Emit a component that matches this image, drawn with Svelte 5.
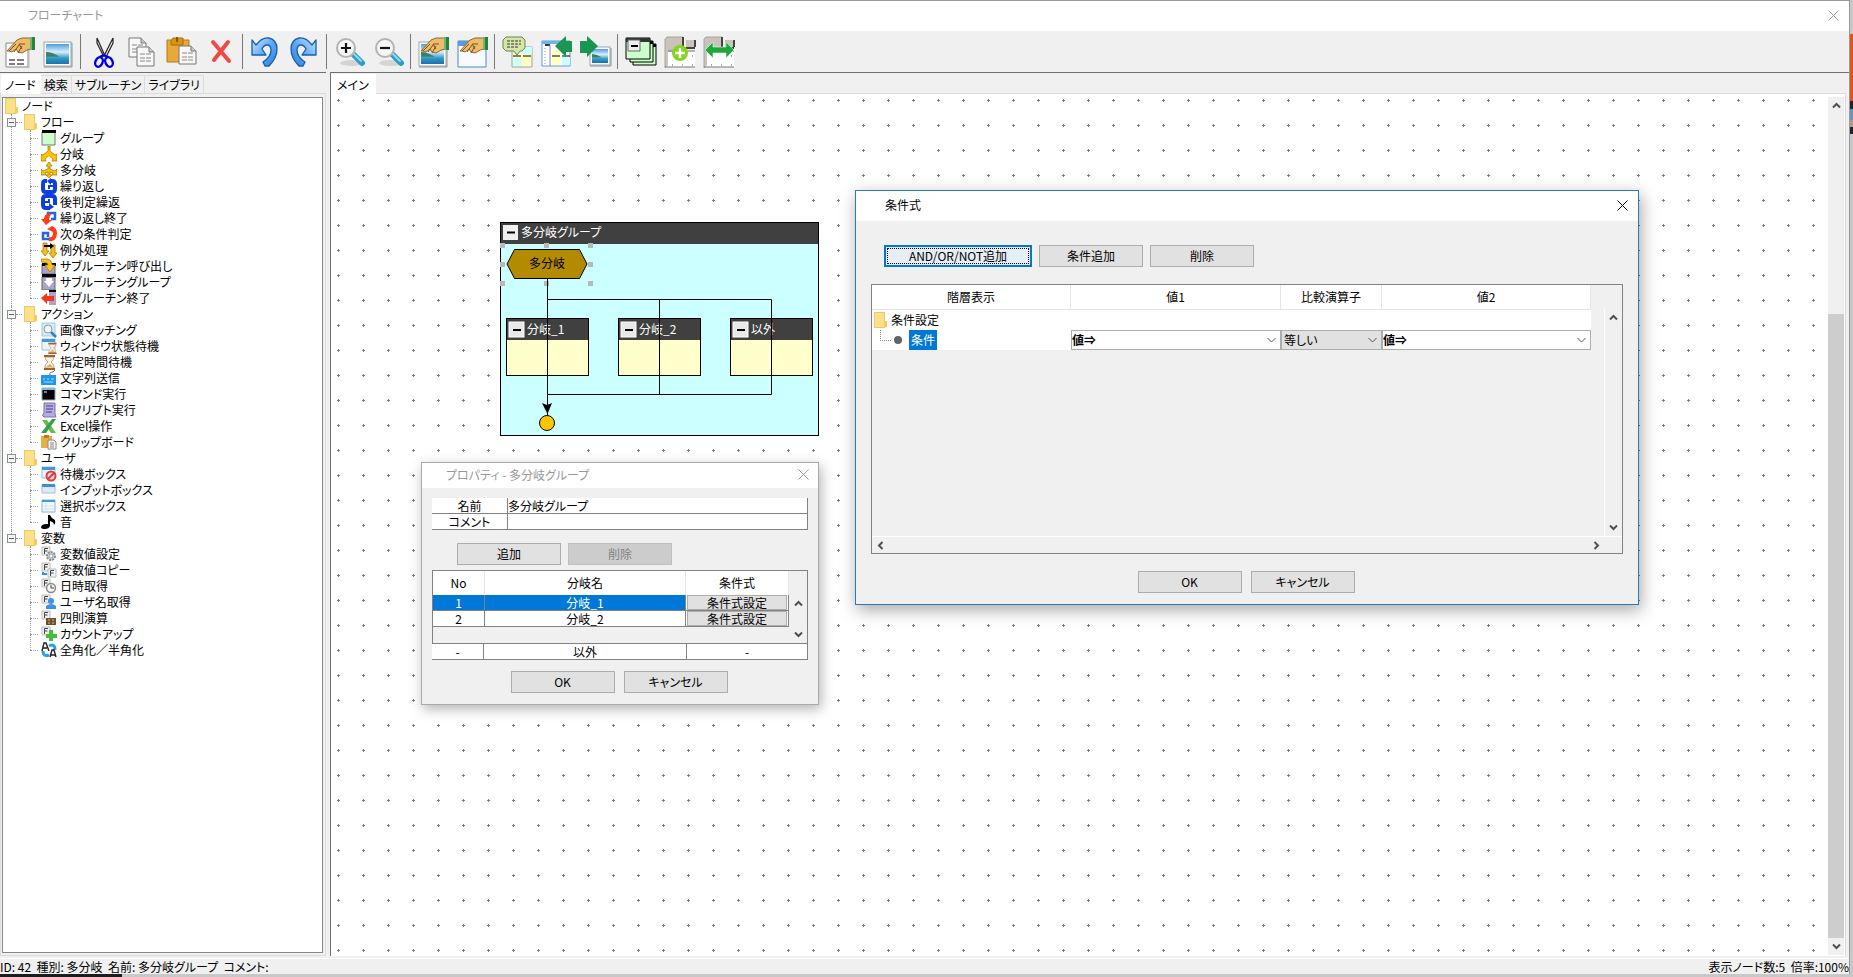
<script>
  const toolGroups = [
    [
      { icon: "props", label: "プロパティ" },
      { icon: "image", label: "画像" },
    ],
    [
      { icon: "cut", label: "切り取り" },
      { icon: "copy", label: "コピー" },
      { icon: "paste", label: "貼り付け" },
      { icon: "delete", label: "削除" },
    ],
    [
      { icon: "undo", label: "元に戻す" },
      { icon: "redo", label: "やり直し" },
    ],
    [
      { icon: "zoomin", label: "拡大" },
      { icon: "zoomout", label: "縮小" },
    ],
    [
      { icon: "imageprops", label: "画像プロパティ" },
      { icon: "windowprops", label: "ウィンドウプロパティ" },
    ],
    [
      { icon: "comment", label: "コメント" },
      { icon: "import", label: "インポート" },
      { icon: "export", label: "エクスポート" },
    ],
    [
      { icon: "groups", label: "グループ" },
      { icon: "addtab", label: "タブ追加" },
      { icon: "movetab", label: "タブ移動" },
    ],
  ];

  const tabs = ["ノード", "検索", "サブルーチン", "ライブラリ"];
  let activeTab = $state("ノード");

  const tree = [
    {
      name: "フロー",
      items: [
        ["group", "グループ"],
        ["branch", "分岐"],
        ["multi", "多分岐"],
        ["loop", "繰り返し"],
        ["postloop", "後判定繰返"],
        ["loopend", "繰り返し終了"],
        ["next", "次の条件判定"],
        ["exception", "例外処理"],
        ["subcall", "サブルーチン呼び出し"],
        ["subgroup", "サブルーチングループ"],
        ["subend", "サブルーチン終了"],
      ],
    },
    {
      name: "アクション",
      items: [
        ["match", "画像マッチング"],
        ["winwait", "ウィンドウ状態待機"],
        ["timewait", "指定時間待機"],
        ["keys", "文字列送信"],
        ["command", "コマンド実行"],
        ["script", "スクリプト実行"],
        ["excel", "Excel操作"],
        ["clipboard", "クリップボード"],
      ],
    },
    {
      name: "ユーザ",
      items: [
        ["waitbox", "待機ボックス"],
        ["inputbox", "インプットボックス"],
        ["selectbox", "選択ボックス"],
        ["sound", "音"],
      ],
    },
    {
      name: "変数",
      items: [
        ["varset", "変数値設定"],
        ["varcopy", "変数値コピー"],
        ["date", "日時取得"],
        ["username", "ユーザ名取得"],
        ["calc", "四則演算"],
        ["countup", "カウントアップ"],
        ["width", "全角化／半角化"],
      ],
    },
  ];

  const boxes = [
    { x: 6, name: "分岐_1" },
    { x: 118, name: "分岐_2" },
    { x: 230, name: "以外" },
  ];
  const handles = [3, 47, 91].flatMap((x) => [21, 40, 59].map((y) => [x, y]));

  let groupName = $state("多分岐グループ");
  let comment = $state("");
  let selectedBranch = $state(1);
  const branches = [
    { no: 1, name: "分岐_1" },
    { no: 2, name: "分岐_2" },
  ];
</script>

{#snippet hand()}
  <path d="M3 15 13 4l5-2h9v11l-4 1-3 2-2 1-4-1-2-3-4 3-3-1z" fill="#edbb6a" stroke="#93682a" />
  <path d="M12 8 5 15M15 9l-5 7M18 10l-4 7M21 8l-6 0 3 5" fill="none" stroke="#7d531c" />
  <path d="M26 1h5v13h-5z" fill="#23843a" />
  <path d="M26 1h2v13h-2z" fill="#69b877" />
{/snippet}

{#snippet picture(x, y, w, h)}
  <rect {x} {y} width={w} height={h} fill="#fff" stroke="#9aa3ad" />
  <path d="M{x} {y + h + 1}h{w + 1}v-{h}" fill="none" stroke="#8a939c" />
  <rect x={x + 2} y={y + 2} width={w - 4} height={h - 4} fill="url(#sky)" />
  <path d="M{x + 2} {y + h / 2 - 2}q{w / 4} 0 {w / 2} {h / 5}h-{w / 2}z" fill="#3d8061" />
{/snippet}

{#snippet sheet(x, y, w, h)}
  <path d="M{x} {y}h{w - 5}l5 5v{h - 5}h-{w}z" fill="#f8f8f8" stroke="#777" />
  <path d="M{x + w - 5} {y}v5h5" fill="#ccc" stroke="#777" />
  <path d="M{x + 3} {y + 7}h{w - 6}m-{w - 6} 4h{w - 6}m-{w - 6} 3h{w - 6}" stroke="#888" stroke-dasharray="5 1" />
{/snippet}

{#snippet tabPage()}
  <path d="M1 32V3l2-2h16v11h11V4" fill="#c9c3bc" stroke="#aaa39b" />
  <path d="M19 1v11h12" fill="none" stroke="#444" stroke-width="2" />
  <path d="M22 4h8v7h-8z" fill="#c9c3bc" />
  <path d="M31 4v7" stroke="#444" stroke-width="2" />
  <path d="M4 16h27v15H4z" fill="#fff" />
  <path d="M4 15h27M1 31h30" stroke="#777" />
  <path d="M8 29h1m9 0h1m9 0h1M28 20h1" stroke="#555" />
{/snippet}

{#snippet magnifier()}
  <ellipse cx="18" cy="27" rx="12" ry="3" fill="#d4d4d4" />
  <path d="M19 18l9 9" stroke="#2e9cc4" stroke-width="6" stroke-linecap="round" />
  <path d="M19 17l8 8" stroke="#8bdcf2" stroke-width="2" stroke-linecap="round" />
  <circle cx="12" cy="12" r="9" fill="#f6f6f6" stroke="#b3b3b3" stroke-width="2" />
{/snippet}

{#snippet toolIcon(kind)}
  <svg viewBox="0 0 32 32" width="32" height="32" aria-hidden="true">
    {#if kind === "props"}
      <path d="M2 7h22v24H2z" fill="#fff" stroke="#888" />
      <path d="M25 8v24H3" fill="none" stroke="#bbb" />
      <path d="M5 24h6m2 0h7M5 28h6m2 0h7" stroke="#555" stroke-width="1.4" />
      {@render hand()}
    {:else if kind === "image"}
      {@render picture(1, 6, 27, 24)}
    {:else if kind === "cut"}
      <path d="M9 2 17 20M25 2l-9 18M9 2v5l6 12M25 2v5l-6 12" fill="#fff" stroke="#222" stroke-width="1.2" />
      <ellipse cx="11" cy="26" rx="3.5" ry="5" transform="rotate(25 11 26)" fill="none" stroke="#0000d8" stroke-width="2.4" />
      <ellipse cx="21" cy="26" rx="3.5" ry="5" transform="rotate(-25 21 26)" fill="none" stroke="#0000d8" stroke-width="2.4" />
      <path d="M12 21q4-3 8 0" fill="none" stroke="#0000d8" stroke-width="2.4" />
    {:else if kind === "copy"}
      {@render sheet(2, 2, 17, 19)}
      {@render sheet(10, 11, 17, 19)}
    {:else if kind === "paste"}
      <path d="M1 4h22v22H1z" fill="#e9a93a" stroke="#b57a1c" />
      <path d="M7 2h10v7H5V5z" fill="#dd9413" stroke="#a76d10" />
      <path d="M11 1v5" stroke="#8a570b" stroke-width="2" />
      {@render sheet(13, 10, 17, 18)}
    {:else if kind === "delete"}
      <path d="M8 6 24 25M23 6 9 24" stroke="#f04848" stroke-width="4" stroke-linecap="round" />
    {:else if kind === "undo" || kind === "redo"}
      <path
        transform={kind === "redo" ? "matrix(-1 0 0 1 29 0)" : undefined}
        d="M2 4 6 9Q12 1 19 2q8 2 8 11 0 9-8 17h-4q-1-2-2-4 8-5 8-12 0-5-4-5-3 0-5 4l4 6H2z"
        fill="url(#blue)"
        stroke="#1560ae"
        stroke-width="1.3"
        stroke-linejoin="round"
      />
    {:else if kind === "zoomin"}
      {@render magnifier()}
      <path d="M7 12h10M12 7v10" stroke="#111" stroke-width="2.2" />
    {:else if kind === "zoomout"}
      {@render magnifier()}
      <path d="M7 12h10" stroke="#111" stroke-width="2.2" />
    {:else if kind === "imageprops"}
      {@render picture(1, 6, 27, 24)}
      {@render hand()}
    {:else if kind === "windowprops"}
      <path d="M1 5h28v26H1z" fill="#f7faff" stroke="#4a86c8" />
      <path d="M1 5h28v5H1z" fill="#5a9be0" />
      {@render hand()}
    {:else if kind === "comment"}
      <path d="M10 11h20v20H10z" fill="#ffffc4" stroke="#92a8a8" />
      <path d="M11 11h8v6h-8m9-6h10v7h-10zM11 22h8v8h-8z" fill="#cff" />
      <path d="M11 20h8m2 0h8" stroke="#000" />
      <path d="M4 1h16l3 3v8l-3 3h-2l-3 4-3-4H4l-3-3V4z" fill="#d5e6a8" stroke="#6c8444" />
      <path d="M5 5h14M5 8h14M5 11h12" stroke="#333" stroke-dasharray="3 1" />
    {:else if kind === "import"}
      <path d="M1 5h28v25H1z" fill="#fff" stroke="#5c9fd8" />
      <path d="M1 5h28v3H1z" fill="#6fb4ea" />
      <path d="M4 9h5" stroke="#336" stroke-width="2" />
      <path d="M9 9v21" stroke="#88a" />
      <path d="M4 12v17" stroke="#99a" stroke-dasharray="1 2" />
      <path d="M11 14h8v15h-8z" fill="#ffffc0" />
      <path d="M21 21h8v8h-8z" fill="#cff" />
      <path d="M11 20h8m2 0h8" stroke="#000" />
      <path d="M14 10 25 0v5h6v11h-6v5z" fill="#199652" />
    {:else if kind === "export"}
      {@render picture(10, 11, 20, 18)}
      <path d="M0 5h7V0l11 10L7 21v-4H0z" fill="#199652" />
    {:else if kind === "groups"}
      <path d="M8 8h23v21H8z" fill="#cfc" stroke="#000" />
      <path d="M8 8h23v3H8z" />
      <path d="M5 5h23v21H5z" fill="#cfc" stroke="#000" />
      <path d="M5 5h23v3H5z" />
      <path d="M1 2h24v21H1z" fill="#cfc" stroke="#000" />
      <path d="M1 2h24v4H1z" fill="#333" />
      <path d="M3 4h12v11H3z" fill="#eee" stroke="#666" />
      <path d="M6 10h7" stroke="#000" stroke-width="2" />
    {:else if kind === "addtab"}
      {@render tabPage()}
      <circle cx="16" cy="17" r="8" fill="#86d51f" />
      <path d="M11 17h10M16 12v10" stroke="#fff" stroke-width="2.4" />
    {:else}
      {@render tabPage()}
      <path d="M2 14 10 6v5h13V6l8 8-8 8v-5H10v5z" fill="#1ea83c" stroke="#e8f6ea" stroke-width=".6" />
    {/if}
  </svg>
{/snippet}

{#snippet folder()}
  <svg class="folder" viewBox="0 0 13 16" width="13" height="16" aria-hidden="true">
    <path d="M0 0h11v16H0z" fill="#fbe08a" />
    <path d="M.5.5h10v15H.5z" fill="none" stroke="#ecc962" />
    <path d="M10 9h3v6l-3 1z" fill="#f3cd5e" />
  </svg>
{/snippet}

{#snippet miniWindow()}
  <path d="M1 1h13v11H1z" fill="#eaf5fd" stroke="#9dbdd6" />
  <path d="M1 1h13v3H1z" fill="#3f9be0" />
{/snippet}

{#snippet varBox()}
  <path d="M1 1h8v8H1z" fill="#f2f2f2" stroke="#bbb" />
  <path d="M3.500 8V2.500H7M3.500 5H6.500" fill="none" stroke="#444" />
{/snippet}

{#snippet nodeIcon(kind)}
  <svg class="node-icon" viewBox="0 0 16 16" width="16" height="16" aria-hidden="true">
    {#if kind === "group"}
      <path d="M1 2h13v13H1z" fill="#cfc" stroke="#777" />
      <path d="M1 0h14v3H1z" />
    {:else if kind === "branch"}
      <path d="M7 0h2v5l5 4 2-1v7h-5l1-2-4-3-4 3 1 2H0V8l2 1 5-4z" fill="#ffc000" stroke="#9a7400" stroke-width=".7" />
      <path d="M8 10l3 3-3 3-3-3z" fill="#fff" />
    {:else if kind === "multi"}
      <path d="M8 0l3 4H9v3l5 2 2-2v6h-5l1-2-3-1v3h2l-3 3-3-3h2v-3l-3 1 1 2H0V7l2 2 5-2V4H5z" fill="#ffc000" stroke="#9a7400" stroke-width=".7" />
    {:else if kind === "loop"}
      <path d="M6 3H4Q2 3 2 6v5q0 3 3 3h6q3 0 3-3V6q0-3-3-3H9" fill="none" stroke="#0a3fe0" stroke-width="4" />
      <path d="M12 8H8v3" fill="none" stroke="#0a3fe0" stroke-width="2" />
      <path d="M10 0v7L6 3z" fill="#0a3fe0" />
    {:else if kind === "postloop"}
      <path d="M9 14H5q-3 0-3-3V5q0-3 3-3h6q3 0 3 3v6" fill="none" stroke="#0a3fe0" stroke-width="4" />
      <path d="M4 8h4V5" fill="none" stroke="#0a3fe0" stroke-width="2" />
      <path d="M8 9v7l5-3z" fill="#0a3fe0" />
    {:else if kind === "loopend"}
      <path d="M7 8V3h7v6h-4" fill="none" stroke="#2464e0" stroke-width="2.500" />
      <path d="M9 3Q3 4 3 9H0l5 6 6-5H8q0-4 2-5z" fill="#ff3b18" />
    {:else if kind === "next"}
      <path d="M9 13H2V7h5v4" fill="none" stroke="#2464e0" stroke-width="2.500" />
      <path d="M8 13q6 1 6-6 0-4-4-5" fill="none" stroke="#ff3b18" stroke-width="4" />
      <path d="M12 0v6L6 3z" fill="#ff3b18" />
    {:else if kind === "exception"}
      <path d="M2 1h4v8h2l-4 5-4-5h2zM10 3h4v8h2l-4 5-4-5h2z" fill="#f8bd16" stroke="#9a7400" stroke-width=".7" />
      <path d="M3 3h6V1l4 3-4 3V5H3z" />
    {:else if kind === "subcall"}
      <path d="M1 6h13v10H1z" fill="#aaa4c8" stroke="#666" />
      <path d="M1 5h14v3H1z" />
      <path d="M0 1h7q4 1 4 6h3l-5 7-5-7h3Q7 4 0 4z" fill="#ffc31d" stroke="#9a7400" stroke-width=".7" />
    {:else if kind === "subgroup"}
      <path d="M1 3h13v13H1z" fill="#aaa4c8" stroke="#666" />
      <path d="M1 0h14v3H1z" />
      <path d="M5 4h6v3h2l-5 6-5-6h2z" fill="#fff" />
    {:else if kind === "subend"}
      <path d="M8 2h7v13H8z" fill="#aaa4c8" />
      <path d="M8 0h7v2H8z" />
      <path d="M0 8l6-5v3h7v5H6v3z" fill="#f33818" />
    {:else if kind === "match"}
      <path d="M1 1h13v13H1z" fill="#d4ecf8" stroke="#a6c8d8" />
      <path d="M10 10l5 5" stroke="#2b82c4" stroke-width="2.500" />
      <circle cx="7" cy="7" r="4" fill="#f3fafd" stroke="#879aa4" />
    {:else if kind === "winwait" || kind === "timewait"}
      {#if kind === "winwait"}{@render miniWindow()}{/if}
      <g transform={kind === "winwait" ? "translate(5 4) scale(.75)" : undefined}>
        <path d="M4 3q0 3 3 5-4 3-3 6h9q1-3-3-6 3-2 3-5z" fill="#f7f2e8" stroke="#b9a68c" />
        <path d="M3 1h11v2H3zM3 14h11v2H3z" fill="#a85f24" />
        <path d="M5 13l4-3 3 3z" fill="#e3b04c" />
      </g>
    {:else if kind === "keys"}
      <path d="M9 5q-1-3 3-3l2-2" fill="none" stroke="#666" />
      <path d="M0 5h15v10H0z" fill="#1f97ea" />
      <path d="M2 9h2m2 0h2m2 0h3M3 12h9" stroke="#a9d9fa" />
    {:else if kind === "command"}
      <path d="M1 2h13v12H1z" fill="#000" stroke="#8aa" />
      <path d="M1 2h13v2H1z" fill="#7db7e8" />
      <path d="M3 6h3" stroke="#fff" />
    {:else if kind === "script"}
      <path d="M3 1h11v11l1 3H3q-3-1 0-4z" fill="#b7abdf" stroke="#7c6db4" />
      <path d="M5 4h7M5 7h7M5 10h6" stroke="#4b3b8c" />
    {:else if kind === "excel"}
      <path d="M1 2h5l9 13h-5z" fill="#6dbb45" />
      <path d="M11 1h4L5 15H0z" fill="#34a04c" />
    {:else if kind === "clipboard"}
      <path d="M0 2h11v12H0z" fill="#e9ae45" />
      <path d="M3 1h5v3H3z" fill="#b9791d" />
      <path d="M7 6h6l2 2v7H7z" fill="#f7f7f7" stroke="#888" />
      <path d="M9 9h4M9 11h4M9 13h4" stroke="#888" />
    {:else if kind === "waitbox"}
      {@render miniWindow()}
      <circle cx="10" cy="10" r="4.500" fill="#f8dada" stroke="#e0393e" stroke-width="2" />
      <path d="M7 13l6-6" stroke="#e0393e" stroke-width="2" />
    {:else if kind === "inputbox"}
      <path d="M1 3h13v8H1z" fill="#dcebf5" stroke="#9dbdd6" />
      <path d="M1 2h13v3H1z" fill="#3f8fd6" />
    {:else if kind === "selectbox"}
      <path d="M1 2h13v12H1z" fill="#f2f9fd" stroke="#89b4d2" />
      <path d="M1 2h13v2H1z" fill="#3f9be0" />
      <path d="M2 8h12M2 11h12M5 5v9" stroke="#cfe2ee" />
    {:else if kind === "sound"}
      <path d="M7 1h2q1 3 5 5 1 3-1 5 0-3-4-4v5q-1 3-5 3-4 0-4-2 1-3 5-3h2z" />
    {:else if kind === "width"}
      <path d="M8 4q6-3 6 4M8 13q-6 2-6-4" fill="none" stroke="#26a3ea" stroke-width="3" />
      <path d="M1 9 3 1h2l3 8M2 6h4" fill="none" stroke="#222" stroke-width="1.400" />
      <path d="M9 15l2-7h2l2 7m-5-2h4" fill="none" stroke="#222" stroke-width="1.400" />
    {:else}
      {@render varBox()}
      {#if kind === "varset"}
        <circle cx="10" cy="10" r="4" fill="#ddd" stroke="#888" stroke-width="2" stroke-dasharray="2 1" />
        <circle cx="10" cy="10" r="2" fill="#fff" stroke="#999" />
      {:else if kind === "varcopy"}
        <g transform="translate(6 6)">{@render varBox()}</g>
        <path d="M2 10v2h4" fill="none" stroke="#2b93e6" stroke-width="2" />
      {:else if kind === "date"}
        <circle cx="10" cy="10" r="4.500" fill="#f4f4f4" stroke="#888" stroke-width="1.500" />
        <path d="M10 7v3h3" fill="none" stroke="#444" />
      {:else if kind === "username"}
        <circle cx="10" cy="7" r="3" fill="#3c93e6" />
        <path d="M5 15v-3q5-4 10 0v3z" fill="#3c93e6" />
      {:else if kind === "calc"}
        <path d="M5 8h10v7H5z" fill="#70502e" />
        <path d="M7 10h2m2 0h2M7 13h2m2 0h2" stroke="#d6b98c" />
      {:else}
        <path d="M10 4v11M5 10h11" stroke="#45bd3c" stroke-width="4" />
      {/if}
    {/if}
  </svg>
{/snippet}

{#snippet arrow(dir)}
  <svg class="arrow {dir}" viewBox="0 0 9 9" width="9" height="9" aria-hidden="true">
    <path d="M1 6.500 4.500 3 8 6.500" fill="none" stroke="#505050" stroke-width="2" />
  </svg>
{/snippet}

{#snippet closeIcon()}
  <svg viewBox="0 0 11 11" width="11" height="11" aria-hidden="true">
    <path d="M.5.5l10 10M10.500.5l-10 10" stroke="currentColor" />
  </svg>
{/snippet}

<svg class="defs" width="0" height="0" aria-hidden="true">
  <linearGradient id="sky" x1="0" y1="0" x2="0" y2="1">
    <stop offset="0" stop-color="#4f9fe0" />
    <stop offset=".4" stop-color="#d9eefa" />
    <stop offset=".7" stop-color="#2f9cc4" />
    <stop offset="1" stop-color="#1d6fae" />
  </linearGradient>
  <linearGradient id="blue" x1="0" y1="0" x2="1" y2="1">
    <stop offset="0" stop-color="#cfe6ff" />
    <stop offset=".5" stop-color="#5fa8f4" />
    <stop offset="1" stop-color="#2b7fe0" />
  </linearGradient>
</svg>

<div class="desktop">
  <div class="window">
    <header class="title">
      <span>フローチャート</span>
      <button class="close" aria-label="閉じる">{@render closeIcon()}</button>
    </header>

    <div class="toolbar">
      {#each toolGroups as group}
        <div class="tools">
          {#each group as tool}
            <button aria-label={tool.label}>{@render toolIcon(tool.icon)}</button>
          {/each}
        </div>
      {/each}
    </div>

    <div class="panes">
      <aside>
        <nav class="tabs">
          {#each tabs as tab}
            <button class:active={activeTab === tab} onclick={() => (activeTab = tab)}>{tab}</button>
          {/each}
        </nav>
        <div class="tree-frame">
          <div class="tree">
            <div class="row root">{@render folder()}<span>ノード</span></div>
            <ul>
              {#each tree as branch}
                <li class="branch">
                  <div class="row">
                    <span class="expander"></span>
                    <span class="stub"></span>
                    {@render folder()}
                    <span class="name">{branch.name}</span>
                  </div>
                  <ul class="leaves">
                    {#each branch.items as [icon, name]}
                      <li class="row leaf">{@render nodeIcon(icon)}<span>{name}</span></li>
                    {/each}
                  </ul>
                </li>
              {/each}
            </ul>
          </div>
        </div>
      </aside>

      <main>
        <nav class="tabs main-tabs"><button class="active">メイン</button></nav>
        <div class="canvas">
          <svg class="dots" width="100%" height="100%" aria-hidden="true">
            <pattern id="dot" width="25" height="25" patternUnits="userSpaceOnUse">
              <path d="M6 6.500h3M7.500 5v3" stroke="#808080" />
            </pattern>
            <rect width="100%" height="100%" fill="url(#dot)" />
          </svg>

          <svg class="flow" viewBox="0 0 319 214" width="319" height="214">
            <rect x=".5" y=".5" width="318" height="213" fill="#cff" stroke="#000" />
            <rect x="1" y="1" width="317" height="21" fill="#404040" />
            <rect x="3" y="3" width="15" height="15" fill="#f0f0f0" />
            <path d="M7 10.500h8" stroke="#000" stroke-width="2" />
            <text x="21" y="15" fill="#fff">多分岐グループ</text>
            {#each handles as [x, y]}
              <rect x={x - 3} y={y} width="5" height="5" fill="#b8b8b8" />
            {/each}
            <path d="M7 42 14.500 27.500h65L87 42l-7.500 14.500h-65z" fill="#b38a00" stroke="#000" />
            <text x="47" y="46" text-anchor="middle">多分岐</text>
            {#each boxes as box}
              <rect x={box.x + 0.5} y="96.5" width="82" height="57" fill="#ffc" stroke="#000" />
              <rect x={box.x + 1} y="97" width="81" height="21" fill="#404040" />
              <rect x={box.x + 3} y="100" width="15" height="15" fill="#e8e8e8" stroke="#fff" />
              <path d="M{box.x + 7} 108h8" stroke="#000" stroke-width="2" />
              <text x={box.x + 21} y="112" fill="#fff">{box.name}</text>
            {/each}
            <path d="M47.500 57v136M47.500 77.500h224v95h-224M159.500 77.500v95" fill="none" stroke="#000" />
            <path d="M42 181l5 2 5-2-4.500 11z" />
            <circle cx="47" cy="201" r="7.500" fill="#ffc600" stroke="#000" />
          </svg>

          <div class="vscroll canvas-scroll">
            <button aria-label="上へ">{@render arrow("up")}</button>
            <div class="before"></div>
            <div class="thumb"></div>
            <button aria-label="下へ">{@render arrow("down")}</button>
          </div>
        </div>
      </main>
    </div>

    <footer>
      <span>ID: 42&nbsp; 種別: 多分岐&nbsp; 名前: 多分岐グループ&nbsp; コメント:</span>
      <span>表示ノード数:5&nbsp; 倍率:100%</span>
    </footer>
  </div>
  <div class="wallpaper"></div>
  <div class="taskbar"></div>

  <section class="dialog property" aria-label="プロパティ">
    <header class="title">
      <span>プロパティ - 多分岐グループ</span>
      <button class="close" aria-label="閉じる">{@render closeIcon()}</button>
    </header>
    <div class="content">
      <table class="fields">
        <tbody>
          <tr>
            <th><label for="name">名前</label></th>
            <td><input id="name" bind:value={groupName} /></td>
          </tr>
          <tr>
            <th><label for="comment">コメント</label></th>
            <td><input id="comment" bind:value={comment} /></td>
          </tr>
        </tbody>
      </table>
      <div class="buttons edit">
        <button class="btn">追加</button>
        <button class="btn" disabled>削除</button>
      </div>
      <div class="list">
        <table class="branches">
          <thead>
            <tr><th class="no">No</th><th>分岐名</th><th class="cond">条件式</th></tr>
          </thead>
          <tbody>
            {#each branches as b}
              <tr class:selected={selectedBranch === b.no} onclick={() => (selectedBranch = b.no)}>
                <td>{b.no}</td>
                <td>{b.name}</td>
                <td class="cell-btn"><button>条件式設定</button></td>
              </tr>
            {/each}
          </tbody>
        </table>
        <div class="vscroll">
          <button aria-label="上へ">{@render arrow("up")}</button>
          <button aria-label="下へ">{@render arrow("down")}</button>
        </div>
      </div>
      <table class="other">
        <tbody>
          <tr><td class="no">-</td><td>以外</td><td class="rest">-</td></tr>
        </tbody>
      </table>
      <div class="buttons confirm">
        <button class="btn">OK</button>
        <button class="btn">キャンセル</button>
      </div>
    </div>
  </section>

  <section class="dialog condition" aria-label="条件式">
    <header class="title">
      <span>条件式</span>
      <button class="close" aria-label="閉じる">{@render closeIcon()}</button>
    </header>
    <div class="content">
      <div class="buttons add">
        <button class="btn wide">AND/OR/NOT追加</button>
        <button class="btn">条件追加</button>
        <button class="btn">削除</button>
      </div>
      <div class="expr">
        <div class="expr-body">
          <table>
            <thead>
              <tr>
                <th class="level">階層表示</th>
                <th class="value">値1</th>
                <th class="op">比較演算子</th>
                <th>値2</th>
              </tr>
            </thead>
            <tbody>
              <tr>
                <td colspan="4"><div class="row root">{@render folder()}<span>条件設定</span></div></td>
              </tr>
              <tr>
                <td>
                  <div class="cond-row">
                    <span class="elbow"></span><span class="bullet"></span><mark>条件</mark>
                  </div>
                </td>
                <td><select class="strong" aria-label="値1"><option>値⇒</option></select></td>
                <td><select class="grey" aria-label="比較演算子"><option>等しい</option></select></td>
                <td><select class="strong" aria-label="値2"><option>値⇒</option></select></td>
              </tr>
            </tbody>
          </table>
          <div class="vscroll">
            <button aria-label="上へ">{@render arrow("up")}</button>
            <button aria-label="下へ">{@render arrow("down")}</button>
          </div>
        </div>
        <div class="hscroll">
          <button aria-label="左へ">{@render arrow("left")}</button>
          <button aria-label="右へ">{@render arrow("right")}</button>
        </div>
      </div>
      <div class="buttons confirm">
        <button class="btn">OK</button>
        <button class="btn">キャンセル</button>
      </div>
    </div>
  </section>
</div>

<style>
  .desktop {
    position: relative;
    display: grid;
    grid-template-columns: 1fr 3px;
    grid-template-rows: 1fr 3px;
    height: 100vh;
    min-height: 720px;
    overflow: hidden;
    background: #c8c8c8;
    color: #000;
    font-family: "Noto Sans CJK JP", sans-serif;
    font-feature-settings: "palt";
    font-size: 12px;
    line-height: 16px;
  }

  .desktop *,
  .desktop {
    box-sizing: border-box;
  }

  .defs {
    position: absolute;
  }

  button,
  input,
  select {
    margin: 0;
    padding: 0;
    border: 0;
    border-radius: 0;
    background: none;
    color: inherit;
    font: inherit;
    font-feature-settings: inherit;
  }

  svg {
    display: block;
  }

  ul {
    margin: 0;
    padding: 0;
    list-style: none;
  }

  table {
    border-spacing: 0;
    table-layout: fixed;
    background: #fff;
  }

  th,
  td {
    padding: 0;
    font-weight: normal;
    text-align: center;
  }

  .window {
    display: flex;
    flex-direction: column;
    min-width: 0;
    min-height: 0;
    border-top: 1px solid #999;
    border-right: 1px solid #999;
    background: #f0f0f0;
  }

  .wallpaper {
    background: linear-gradient(
      #c8c8c8 34px,
      #e0541c 34px 101px,
      #223 101px 109px,
      #6a94c0 109px 120px,
      #b39a86 120px 127px,
      #223 127px 134px,
      #c8c8c8 134px
    );
  }

  .taskbar {
    grid-column: 1 / 3;
    background: linear-gradient(to right, #1c1c1c 122px, #c8c8c8 122px);
  }

  .title {
    display: flex;
    align-items: center;
    justify-content: space-between;
    height: 30px;
    padding: 0 10px 2px 28px;
    background: #fff;
    color: #999;
  }

  .close {
    color: inherit;
  }

  .toolbar {
    display: flex;
    align-items: center;
    height: 41px;
    padding-left: 4px;
  }

  .tools {
    display: flex;
    gap: 7px;
    height: 35px;
    padding-right: 5px;
    margin-right: 7px;
    border-right: 1px solid #777;
  }

  .tools:last-child {
    border: 0;
  }

  .panes {
    display: flex;
    flex: 1;
    gap: 4px;
    min-height: 0;
  }

  aside {
    display: flex;
    flex-direction: column;
    flex: none;
    width: 326px;
    border-top: 1px solid #707070;
  }

  .tabs {
    display: flex;
    align-items: flex-end;
    height: 21px;
    padding-left: 1px;
    border-bottom: 1px solid #dcdcdc;
  }

  .tabs button {
    height: 18px;
    padding: 0 3px;
    border: 1px solid #dcdcdc;
    border-width: 1px 1px 0 0;
    white-space: nowrap;
  }

  .tabs .active {
    height: 20px;
    padding: 0 4px;
    margin-bottom: -1px;
    border-color: #fff;
    background: #fff;
  }

  .tree-frame {
    flex: 1;
    min-height: 0;
    padding: 3px 2px 2px 1px;
    border: 1px solid #dcdcdc;
    border-top: 0;
  }

  .tree {
    height: 100%;
    overflow: hidden;
    border: 1px solid #828790;
    background: #fff;
  }

  .row {
    display: flex;
    align-items: center;
    height: 16px;
    white-space: nowrap;
  }

  .folder,
  .node-icon {
    flex: none;
  }

  .root {
    gap: 4px;
    padding-left: 2px;
  }

  .branch {
    position: relative;
  }

  .branch::before {
    content: "";
    position: absolute;
    top: 0;
    bottom: 0;
    left: 8px;
    border-left: 1px dotted #999;
  }

  .branch:last-child::before {
    bottom: auto;
    height: 8px;
  }

  .expander {
    position: relative;
    width: 9px;
    height: 9px;
    margin-left: 4px;
    border: 1px solid #919191;
    background: linear-gradient(#4b63a7, #4b63a7) center / 5px 1px no-repeat #f4f4f4;
  }

  .stub {
    width: 6px;
    margin: 0 2px 0 0;
    border-top: 1px dotted #999;
  }

  .name {
    padding-left: 4px;
  }

  .leaves {
    position: relative;
  }

  .leaves::before {
    content: "";
    position: absolute;
    top: 0;
    bottom: 8px;
    left: 27px;
    border-left: 1px dotted #999;
  }

  .leaf {
    gap: 3px;
    padding-left: 27px;
  }

  .leaf::before {
    content: "";
    width: 8px;
    border-top: 1px dotted #999;
  }

  main {
    display: flex;
    flex: 1;
    flex-direction: column;
    min-width: 0;
    padding-right: 3px;
    border-top: 1px solid #707070;
    border-left: 1px solid #707070;
  }

  .main-tabs {
    padding-left: 0;
  }

  .main-tabs .active {
    padding: 0 6px;
  }

  .canvas {
    position: relative;
    display: flex;
    flex: 1;
    justify-content: flex-end;
    min-height: 0;
    padding: 3px 1px 1px 0;
    border-right: 1px solid #dcdcdc;
    background: #fff;
  }

  .dots {
    position: absolute;
    inset: 0;
  }

  .flow {
    position: absolute;
    top: 128px;
    left: 169px;
  }

  .vscroll {
    display: flex;
    flex-direction: column;
    justify-content: space-between;
    width: 16px;
  }

  .vscroll button,
  .hscroll button {
    display: flex;
    align-items: center;
    justify-content: center;
    flex: none;
    width: 100%;
    height: 17px;
  }

  .canvas-scroll {
    position: relative;
    background: #f0f0f0;
  }

  .before {
    flex: 200;
  }

  .thumb {
    flex: 626;
    background: #cdcdcd;
  }

  .down {
    transform: rotate(180deg);
  }

  .left {
    transform: rotate(-90deg);
  }

  .right {
    transform: rotate(90deg);
  }

  footer {
    display: flex;
    justify-content: space-between;
    align-items: center;
    height: 16px;
    margin-top: 2px;
    border-top: 1px solid #fff;
    white-space: nowrap;
  }

  .dialog {
    position: absolute;
    border: 1px solid #aaa;
    background: #f0f0f0;
    box-shadow: 2px 4px 12px rgba(0, 0, 0, 0.3);
  }

  .buttons {
    display: flex;
  }

  .btn {
    width: 104px;
    height: 22px;
    border: 1px solid #adadad;
    background: #e1e1e1;
  }

  .btn:disabled {
    border-color: #bfbfbf;
    background: #ccc;
    color: #838383;
  }

  .property {
    top: 462px;
    left: 421px;
    width: 398px;
  }

  .property .title {
    height: 25px;
    padding: 0 9px 2px 24px;
  }

  .property .content {
    padding: 10px 10px 11px;
  }

  .fields,
  .other {
    width: 100%;
  }

  .fields th,
  .fields td {
    height: 16px;
    line-height: 15px;
    border-right: 1px solid #828282;
    border-bottom: 1px solid #828282;
  }

  .fields th {
    width: 76px;
  }

  .fields input {
    display: block;
    width: 100%;
    height: 15px;
    outline: 0;
  }

  .edit {
    gap: 7px;
    padding: 13px 25px 5px;
  }

  .list {
    display: flex;
    justify-content: space-between;
    border: 1px solid #828282;
  }

  .branches {
    width: 357px;
    align-self: flex-start;
  }

  .branches th {
    height: 24px;
    border-right: 1px solid #e5e5e5;
  }

  .branches td,
  .other td {
    height: 16px;
    line-height: 15px;
    border-right: 1px solid #828282;
    border-bottom: 1px solid #828282;
  }

  .no {
    width: 52px;
  }

  .cond {
    width: 103px;
  }

  .rest {
    width: 121px;
  }

  .selected td {
    background: #0078d7;
    color: #fff;
  }

  .branches .cell-btn {
    padding: 0 1px;
    background: #fff;
  }

  .cell-btn button {
    display: block;
    width: 100%;
    height: 15px;
    border: 1px solid #adadad;
    background: #e1e1e1;
    color: #000;
    line-height: 13px;
  }

  .list .vscroll {
    width: 18px;
    padding: 24px 0 0;
    height: 72px;
  }

  .confirm {
    justify-content: center;
    gap: 9px;
    padding-right: 2px;
  }

  .property .confirm {
    padding-top: 11px;
  }

  .condition {
    top: 190px;
    left: 855px;
    width: 784px;
    border-color: #2a78b8;
    box-shadow: 2px 5px 16px rgba(0, 0, 0, 0.35);
  }

  .condition .title {
    padding: 0 10px 2px 29px;
    color: #000;
  }

  .condition .content {
    padding: 24px 15px 11px;
  }

  .add {
    gap: 7px;
    padding: 0 13px 17px;
  }

  .wide {
    width: 148px;
    border: 2px solid #0078d7;
    background: #e5edf5;
    outline: 1px dotted #000;
    outline-offset: -4px;
  }

  .expr {
    border: 1px solid #828282;
  }

  .expr-body {
    display: flex;
    justify-content: space-between;
    height: 251px;
  }

  .expr table {
    width: 719px;
    align-self: flex-start;
  }

  .expr th {
    height: 25px;
    border-right: 1px solid #e5e5e5;
    border-bottom: 1px solid #e5e5e5;
  }

  .expr td {
    height: 20px;
  }

  .level {
    width: 199px;
  }

  .value {
    width: 210px;
  }

  .op {
    width: 101px;
  }

  .cond-row {
    display: flex;
    align-items: center;
    height: 20px;
    padding-left: 8px;
  }

  .elbow {
    align-self: flex-start;
    width: 11px;
    height: 11px;
    border: 1px dotted #888;
    border-width: 0 0 1px 1px;
  }

  .bullet {
    width: 8px;
    height: 8px;
    margin: 0 7px 0 3px;
    border-radius: 50%;
    background: #606468;
  }

  mark {
    height: 20px;
    padding: 0 2px;
    background: #0078d7;
    color: #fff;
    line-height: 20px;
  }

  select {
    display: block;
    width: 100%;
    height: 20px;
    border: 1px solid #adadad;
    appearance: none;
    background: #fff url("data:image/svg+xml,%3Csvg xmlns='http://www.w3.org/2000/svg' width='9' height='6'%3E%3Cpath d='M.5 1l4 4 4-4' fill='none' stroke='%23555'/%3E%3C/svg%3E") right 4px center no-repeat;
    line-height: 18px;
  }

  .strong {
    font-weight: bold;
  }

  .grey {
    padding-left: 2px;
    background-color: #e1e1e1;
  }

  .expr .vscroll {
    width: 18px;
    margin-top: 24px;
    border-left: 1px solid #fff;
  }

  .hscroll {
    display: flex;
    justify-content: space-between;
    height: 17px;
    padding-right: 17px;
    border-top: 1px solid #fff;
  }

  .hscroll button {
    width: 17px;
    height: 16px;
  }

  .condition .confirm {
    padding-top: 17px;
  }
</style>
